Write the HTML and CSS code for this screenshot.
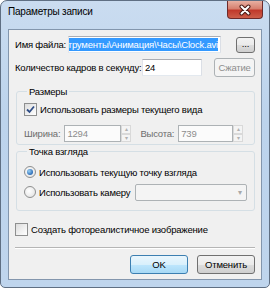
FILE: index.html
```html
<!DOCTYPE html>
<html lang="ru">
<head>
  <meta charset="UTF-8">
  <title>Параметры записи</title>
  <link rel="stylesheet" href="styles.css">
</head>
<body>
  <div class="window">
    <div class="titlebar">
      <div class="title">Параметры записи</div>
      <div class="close-btn">
        <svg width="14" height="12" viewBox="0 0 14 12">
          <path d="M3.5 2.5 L10.5 9.5 M10.5 2.5 L3.5 9.5" stroke="#4a1a14" stroke-width="4" stroke-linecap="round"/>
          <path d="M3.5 2.5 L10.5 9.5 M10.5 2.5 L3.5 9.5" stroke="#ffffff" stroke-width="2" stroke-linecap="round"/>
        </svg>
      </div>
    </div>

    <div class="client">
      <div class="row row-file">
        <span class="label">Имя файла:</span>
        <div class="textbox file-box">
          <span class="selected">струменты\Анимация\Часы\Clock.avi</span>
        </div>
        <div class="btn btn-browse">...</div>
      </div>

      <div class="row row-fps">
        <span class="label">Количество кадров в секунду:</span>
        <div class="textbox fps-box">24</div>
        <div class="btn btn-disabled btn-compress">Сжатие</div>
      </div>

      <fieldset class="group group-size">
        <legend>Размеры</legend>
        <div class="check-row">
          <span class="checkbox checked">
            <svg width="9" height="9" viewBox="0 0 9 9">
              <path d="M1 4.5 L3.5 7 L8 1.5" fill="none" stroke="#2f4d86" stroke-width="1.8"/>
            </svg>
          </span>
          <span>Использовать размеры текущего вида</span>
        </div>
        <div class="row size-row">
          <span class="label dim">Ширина:</span>
          <div class="spin">
            <div class="textbox disabled w-box">1294</div>
            <div class="spin-arrows"><span>&#9652;</span><span>&#9662;</span></div>
          </div>
          <span class="label dim h-label">Высота:</span>
          <div class="spin">
            <div class="textbox disabled h-box">739</div>
            <div class="spin-arrows"><span>&#9652;</span><span>&#9662;</span></div>
          </div>
        </div>
      </fieldset>

      <fieldset class="group group-view">
        <legend>Точка взгляда</legend>
        <div class="radio-row">
          <span class="radio selected"></span>
          <span>Использовать текущую точку взгляда</span>
        </div>
        <div class="radio-row">
          <span class="radio"></span>
          <span>Использовать камеру</span>
          <div class="combo"><span class="combo-arrow">&#9662;</span></div>
        </div>
      </fieldset>

      <div class="check-row photo-row">
        <span class="checkbox"></span>
        <span>Создать фотореалистичное изображение</span>
      </div>

      <div class="separator"></div>

      <div class="buttons">
        <div class="btn btn-default">OK</div>
        <div class="btn">Отменить</div>
      </div>
    </div>
  </div>
</body>
</html>
```

FILE: styles.css
```css
body {
  margin: 0;
  font-family: "Liberation Sans", Arial, sans-serif;
  font-size: 9.5px;
  letter-spacing: -0.2px;
  color: #000;
  background: #fff;
}
.window {
  width: 270px;
  height: 288px;
  box-sizing: border-box;
  border: 1px solid #5f6f83;
  border-radius: 7px 7px 5px 5px;
  background: linear-gradient(#cadcf0, #bcd3ec 40%, #bfd5ed);
  display: flex;
  flex-direction: column;
}
.titlebar {
  height: 28px;
  display: flex;
  justify-content: space-between;
  align-items: flex-start;
}
.title {
  padding: 5px 0 0 7px;
  font-size: 10px;
}
.close-btn {
  width: 36px;
  height: 18px;
  margin-right: 6px;
  box-sizing: border-box;
  border: 1px solid #6d2a2a;
  border-top: none;
  border-radius: 0 0 4px 4px;
  background: linear-gradient(#e8b0a2, #d6806f 45%, #c0392b 55%, #cc5e4a);
  display: flex;
  align-items: center;
  justify-content: center;
}
.client {
  flex: 1;
  margin: 0 7px 7px 7px;
  border: 1px solid #8396ad;
  background: #f0f0f0;
  padding: 6px 6px 0 6px;
}
.row {
  display: flex;
  align-items: center;
}
.row > * {
  flex-shrink: 0;
}
.label {
  white-space: nowrap;
}
.textbox {
  height: 17px;
  box-sizing: border-box;
  border: 1px solid #abadb3;
  border-color: #abadb3 #dbdfe6 #e3e9ef #e2e3ea;
  background: #fff;
  display: flex;
  align-items: center;
  padding: 0 2px;
  overflow: hidden;
  white-space: nowrap;
}
.file-box {
  width: 153px;
  margin-left: auto;
  justify-content: flex-end;
}
.selected {
  background: #3399ff;
  color: #fff;
  flex-shrink: 0;
  line-height: 13px;
}
.btn {
  height: 19px;
  box-sizing: border-box;
  border: 1px solid #707070;
  border-radius: 3px;
  background: linear-gradient(#f2f2f2, #ebebeb 50%, #dddddd 51%, #cfcfcf);
  display: flex;
  align-items: center;
  justify-content: center;
  white-space: nowrap;
}
.btn-browse {
  width: 19px;
  height: 16px;
  margin-left: 15px;
  padding-bottom: 3px;
}
.row-fps {
  margin-top: 5px;
}
.fps-box {
  width: 60px;
  margin-left: auto;
}
.btn-disabled {
  border-color: #adb2b5;
  background: #f4f4f4;
  color: #8d8d8d;
}
.btn-compress {
  width: 41px;
  margin-left: 12px;
}
.group {
  margin: 8px 0 0 1px;
  padding: 0 6px 5px 7px;
  border: 1px solid #d5dfe5;
  border-radius: 3px;
}
.group legend {
  padding: 0 2px;
  margin-left: 3px;
  line-height: 13px;
}
.group-size {
  padding-top: 1px;
  padding-bottom: 2px;
}
.check-row,
.radio-row {
  display: flex;
  align-items: center;
  height: 20px;
  white-space: nowrap;
}
.checkbox {
  width: 13px;
  height: 13px;
  flex-shrink: 0;
  box-sizing: border-box;
  border: 1px solid #8e8f8f;
  background: linear-gradient(135deg, #dcdcdc, #f5f5f5 70%, #ffffff);
  margin-right: 3px;
  display: flex;
  align-items: center;
  justify-content: center;
}
.size-row {
  margin-top: 6px;
}
.dim {
  color: #6d6d6d;
}
.spin {
  display: flex;
  margin-left: 4px;
}
.disabled {
  background: #fbfbfb;
  border-color: #adb2b5;
  color: #8d8d8d;
}
.w-box {
  width: 57px;
}
.h-box {
  width: 55px;
}
.h-label {
  margin-left: 9px;
}
.spin-arrows {
  width: 10px;
  height: 17px;
  display: flex;
  flex-direction: column;
}
.spin-arrows span {
  flex: 1;
  box-sizing: border-box;
  border: 1px solid #d9d9d9;
  background: #f4f4f4;
  color: #b0b0b0;
  font-size: 6px;
  line-height: 6px;
  text-align: center;
}
.group-view {
  margin-top: 0;
  padding-top: 4px;
  padding-bottom: 8px;
}
.radio {
  width: 12px;
  height: 12px;
  flex-shrink: 0;
  box-sizing: border-box;
  border: 1px solid #8e8f8f;
  border-radius: 50%;
  background: radial-gradient(circle at 40% 40%, #ffffff, #dedede);
  margin-right: 3px;
  display: flex;
  align-items: center;
  justify-content: center;
}
.radio.selected::after {
  content: "";
  width: 6px;
  height: 6px;
  border-radius: 50%;
  background: radial-gradient(circle at 35% 35%, #9ad2f5, #2e6db8 70%);
}
.combo {
  width: 112px;
  height: 17px;
  flex-shrink: 0;
  margin-left: auto;
  margin-right: 1px;
  box-sizing: border-box;
  border: 1px solid #adb2b5;
  border-radius: 2px;
  background: #f4f4f4;
  display: flex;
  align-items: center;
  justify-content: flex-end;
}
.combo-arrow {
  color: #a8a8a8;
  font-size: 8px;
  margin-right: 4px;
}
.photo-row {
  margin-top: 8px;
}
.separator {
  margin-top: 8px;
  border-top: 1px solid #b5b5b5;
  border-bottom: 1px solid #ffffff;
}
.buttons {
  display: flex;
  justify-content: flex-end;
  gap: 9px;
  margin-top: 6px;
}
.buttons .btn {
  width: 58px;
}
.btn-default {
  border-color: #3c7fb1;
  background: linear-gradient(#eaf6fd, #d9f0fc 50%, #bee6fd 51%, #a7d9f5);
}
```
